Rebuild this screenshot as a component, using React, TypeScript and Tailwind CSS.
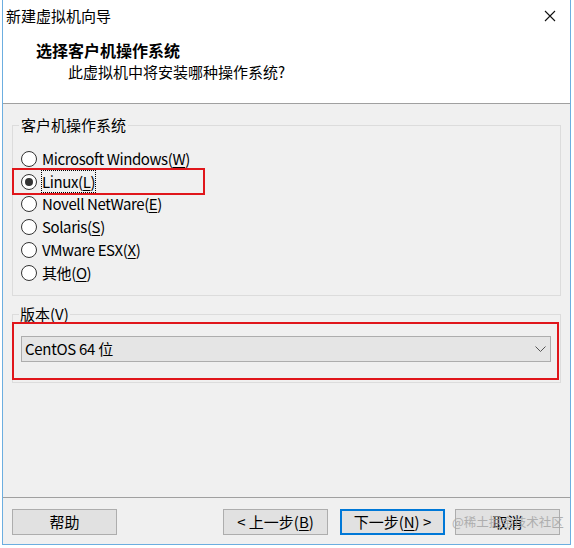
import React from "react";

const font = { fontFamily: '"Noto Sans CJK SC", "Noto Sans", sans-serif' };

function Radio({ checked, children }: { checked?: boolean; children: React.ReactNode }) {
  return (
    <div className="flex h-[22.75px] items-center">
      <span className="ml-[8px] flex h-[16px] w-[16px] items-center justify-center rounded-full border border-[#333333] bg-white">
        {checked && <span className="h-[8px] w-[8px] rounded-full bg-[#333333]" />}
      </span>
      <span className="ml-[5px] tracking-[-0.4px]">{children}</span>
    </div>
  );
}

function U({ children }: { children: React.ReactNode }) {
  return <span className="underline underline-offset-2 decoration-1">{children}</span>;
}

export default function App() {
  return (
    <div className="h-[548px] w-[574px] overflow-hidden bg-white text-[15px] leading-[20px] text-black" style={font}>
      <div className="ml-[2px] flex h-[545px] w-[569px] flex-col border-x border-b border-[#6caee0]">
        {/* white top */}
        <div className="h-[104px] border-b border-[#a0a0a0] bg-white">
          <div className="flex h-[32px] items-center pl-[3px] pr-[14px]">
            <span className="flex-1">新建虚拟机向导</span>
            <svg width="12" height="12" viewBox="0 0 12 12">
              <path d="M1 1 L11 11 M11 1 L1 11" stroke="#111" strokeWidth="1.1" fill="none" />
            </svg>
          </div>
          <div className="mt-[7px] pl-[33px] text-[16px] font-bold leading-[22px]">选择客户机操作系统</div>
          <div className="mt-[1px] pl-[65px] leading-[20px]">此虚拟机中将安装哪种操作系统?</div>
        </div>

        {/* body */}
        <div className="flex flex-1 flex-col bg-[#f0f0f0]">
          <fieldset className="ml-[9px] mt-[11px] w-[549px] border border-[#dcdcdc] px-0 pb-[11px] pt-[12.5px]">
            <legend className="ml-[6px] px-[2px] leading-[20px]">客户机操作系统</legend>
            <Radio>
              Microsoft Windows(<U>W</U>)
            </Radio>
            <div className="relative">
              <Radio checked>
                <span className="outline outline-1 outline-dotted outline-black">
                  Linux(<U>L</U>)
                </span>
              </Radio>
              <div className="absolute left-[-1px] top-[-2.75px] h-[27px] w-[193px] border-2 border-[#e0161b]" />
            </div>
            <Radio>
              Novell NetWare(<U>E</U>)
            </Radio>
            <Radio>
              Solaris(<U>S</U>)
            </Radio>
            <Radio>
              VMware ESX(<U>X</U>)
            </Radio>
            <Radio>
              其他(<U>O</U>)
            </Radio>
          </fieldset>

          <fieldset className="ml-[9px] mt-[8px] w-[549px] border border-[#dcdcdc] px-0 pb-[20px] pt-[12px]">
            <legend className="ml-[6px] px-[1px] leading-[20px]">
              版本(<U>V</U>)
            </legend>
            <div className="relative ml-[8px] w-[530px]">
              <div className="flex h-[26px] items-center border border-[#adadad] bg-[#e5e5e5] pl-[3px] pr-[4px]">
                <span className="flex-1 tracking-[-0.3px]">CentOS 64 位</span>
                <svg width="11" height="6" viewBox="0 0 11 6">
                  <path d="M0.5 0.5 L5.5 5.5 L10.5 0.5" stroke="#555" strokeWidth="1" fill="none" />
                </svg>
              </div>
              <div className="absolute left-[-9px] top-[-14px] h-[58px] w-[547px] border-2 border-[#e0161b]" />
            </div>
          </fieldset>

          <div className="flex-1" />

          <div className="relative flex h-[47px] items-start border-t border-[#a0a0a0] pt-[11px]">
            <button className="ml-[9px] flex h-[26px] w-[105px] items-center justify-center border border-[#adadad] bg-[#e1e1e1]">
              帮助
            </button>
            <div className="flex-1" />
            <button className="flex h-[26px] w-[105px] items-center justify-center border border-[#adadad] bg-[#e1e1e1]">
              &lt; 上一步(<U>B</U>)
            </button>
            <button className="ml-[12px] flex h-[26px] w-[105px] items-center justify-center border-2 border-[#0078d7] bg-[#e1e1e1]">
              下一步(<U>N</U>) &gt;
            </button>
            <button className="ml-[10px] mr-[10px] flex h-[26px] w-[105px] items-center justify-center border border-[#adadad] bg-[#e1e1e1]">
              取消
            </button>
            <div className="pointer-events-none absolute left-[449px] top-[14px] text-[12.5px] leading-[20px] text-[#a9a9a9] opacity-90">
              @稀土掘金技术社区
            </div>
          </div>
        </div>
      </div>
    </div>
  );
}
